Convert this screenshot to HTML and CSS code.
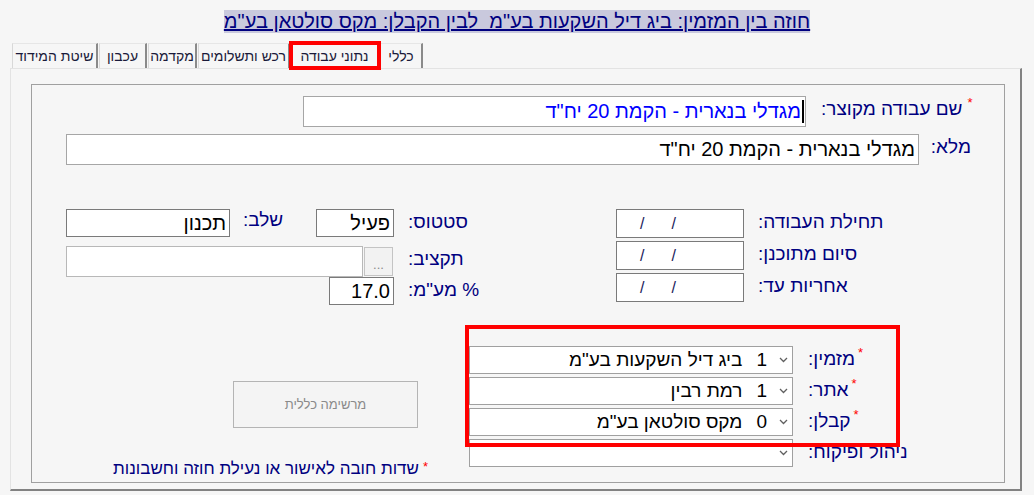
FILE: index.html
```html
<!DOCTYPE html>
<html lang="he" dir="rtl">
<head>
    <meta charset="UTF-8">
    <meta name="viewport" content="width=device-width, initial-scale=1.0">
    <title>נתוני עבודה</title>
    <link rel="stylesheet" href="styles.css">
</head>
<body>
    <div class="title-row">
        <h1 class="contract-title">חוזה בין המזמין: ביג דיל השקעות בע"מ&nbsp; לבין הקבלן: מקס סולטאן בע"מ</h1>
    </div>

    <!-- tabs, first tab is the rightmost -->
    <div class="tabs">
        <div class="tab tab-general">כללי</div>
        <div class="tab tab-work tab-marked">נתוני עבודה</div>
        <div class="tab tab-purchase">רכש ותשלומים</div>
        <div class="tab tab-advance">מקדמה</div>
        <div class="tab tab-retention">עכבון</div>
        <div class="tab tab-measure">שיטת המידוד</div>
    </div>

    <div class="panel">
        <div class="frame">
            <div class="row row-short">
                <div class="label lbl-short"><span class="req">*</span>שם עבודה מקוצר:</div>
                <div class="field field-short"><span class="caret"></span>מגדלי בנארית - הקמת 20 יח"ד</div>
            </div>
            <div class="row row-full">
                <div class="label lbl-full">מלא:</div>
                <div class="field field-full">מגדלי בנארית - הקמת 20 יח"ד</div>
            </div>

            <div class="details">
                <div class="dates">
                    <div class="row date-row">
                        <div class="label lbl-date">תחילת העבודה:</div>
                        <div class="field date"><span>/</span><span>/</span></div>
                    </div>
                    <div class="row date-row">
                        <div class="label lbl-date">סיום מתוכנן:</div>
                        <div class="field date"><span>/</span><span>/</span></div>
                    </div>
                    <div class="row date-row">
                        <div class="label lbl-date">אחריות עד:</div>
                        <div class="field date"><span>/</span><span>/</span></div>
                    </div>
                </div>

                <div class="status">
                    <div class="row status-row">
                        <div class="label lbl-status">סטטוס:</div>
                        <div class="field field-status">פעיל</div>
                        <div class="label lbl-stage">שלב:</div>
                        <div class="field field-stage">תכנון</div>
                    </div>
                    <div class="row budget-row">
                        <div class="label lbl-status">תקציב:</div>
                        <div class="dots-btn">...</div>
                        <div class="field field-budget"></div>
                    </div>
                    <div class="row vat-row">
                        <div class="label lbl-status">% מע"מ:</div>
                        <div class="field field-vat">17.0</div>
                    </div>
                </div>
            </div>

            <div class="parties">
                <div class="party-list">
                    <div class="row party-row">
                        <div class="label lbl-party"><span class="req">*</span>מזמין:</div>
                        <div class="select">
                            <span class="chev"><svg width="9" height="6" viewBox="0 0 9 6"><path d="M1 1l3.5 3.5L8 1" fill="none" stroke="#606060" stroke-width="1.3"/></svg></span>
                            <span class="code">1</span>
                            <span class="name">ביג דיל השקעות בע"מ</span>
                        </div>
                    </div>
                    <div class="row party-row">
                        <div class="label lbl-party"><span class="req">*</span>אתר:</div>
                        <div class="select">
                            <span class="chev"><svg width="9" height="6" viewBox="0 0 9 6"><path d="M1 1l3.5 3.5L8 1" fill="none" stroke="#606060" stroke-width="1.3"/></svg></span>
                            <span class="code">1</span>
                            <span class="name">רמת רבין</span>
                        </div>
                    </div>
                    <div class="row party-row">
                        <div class="label lbl-party"><span class="req">*</span>קבלן:</div>
                        <div class="select">
                            <span class="chev"><svg width="9" height="6" viewBox="0 0 9 6"><path d="M1 1l3.5 3.5L8 1" fill="none" stroke="#606060" stroke-width="1.3"/></svg></span>
                            <span class="code">0</span>
                            <span class="name">מקס סולטאן בע"מ</span>
                        </div>
                    </div>
                    <div class="row party-row">
                        <div class="label lbl-party">ניהול ופיקוח:</div>
                        <div class="select">
                            <span class="chev"><svg width="9" height="6" viewBox="0 0 9 6"><path d="M1 1l3.5 3.5L8 1" fill="none" stroke="#606060" stroke-width="1.3"/></svg></span>
                        </div>
                    </div>
                </div>

                <div class="side">
                    <button type="button" class="summary-btn" disabled>מרשימה כללית</button>
                    <div class="note"><span class="req">*</span>שדות חובה לאישור או נעילת חוזה וחשבונות</div>
                </div>

                <div class="marker"></div> <!-- red highlight around required parties -->
            </div>
        </div>
    </div>
</body>
</html>
```

FILE: styles.css
```css
* {
    box-sizing: border-box;
}
body {
    margin: 0;
    background-color: #f6f6f6;
    font-family: "Liberation Sans", Arial, sans-serif;
    color: #000080;
}

/* Title */
.title-row {
    text-align: center;
    padding-top: 10px;
    height: 43px;
}
.contract-title {
    display: inline-block;
    margin: 0;
    font-size: 20px;
    font-weight: normal;
    line-height: 23px;
    background-color: #c9c9dd;
    color: #000080;
    text-decoration: underline;
}

/* Tabs */
.tabs {
    display: flex;
    justify-content: flex-end;
    gap: 1px;
    padding-left: 12px;
    height: 25px;
}
.tab {
    height: 25px;
    border-top: 1px solid #e6e6e6;
    border-left: 1px solid #d8d8d8;
    border-right: 2px solid #8a8a8a;
    font-size: 14px;
    line-height: 24px;
    color: #1a1a3a;
    text-align: center;
    white-space: nowrap;
    overflow: hidden;
}
.tab-general { width: 43px; }
.tab-work { width: 88px; }
.tab-purchase { width: 92px; }
.tab-advance { width: 49px; }
.tab-retention { width: 48px; }
.tab-measure { width: 86px; }
.tab-marked {
    outline: 4px solid #ff0000;
    outline-offset: -2px;
    position: relative;
    z-index: 1;
}

/* Tab panel */
.panel {
    margin: 0 12px 0 10px;
    height: 423px;
    border-top: 1px solid #e3e3e3;
    border-left: 1px solid #e3e3e3;
    border-right: 2px solid #828282;
    border-bottom: 2px solid #828282;
    padding: 15px 15px 6px 20px;
}
.frame {
    height: 399px;
    border: 1px solid #a0a0a0;
}

/* Generic row / label / field */
.row {
    display: flex;
    align-items: flex-start;
}
.label {
    font-size: 19px;
    line-height: 26px;
    color: #000080;
    text-align: left;
    white-space: nowrap;
}
.req {
    color: #ff0000;
    font-size: 13px;
    vertical-align: top;
    line-height: 14px;
    margin-left: 5px;
}
.field {
    background-color: #fff;
    border: 1px solid #7a7a7a;
    font-size: 20px;
    color: #000;
    padding: 0 3px;
    white-space: nowrap;
    overflow: hidden;
}

/* Name rows */
.row-short {
    margin-top: 11px;
    padding-right: 22px;
}
.lbl-short { width: 161px; }
.field-short {
    display: flex;
    align-items: center;
    width: 503px;
    height: 31px;
    margin-right: 15px;
    border-color: #a6a6a6;
    color: #0000ff;
    padding-right: 1px;
}
.caret {
    width: 2px;
    height: 23px;
    background-color: #000;
    margin-left: 1px;
}
.row-full {
    margin-top: 7px;
    padding-right: 33px;
}
.lbl-full { width: 36px; }
.field-full {
    width: 853px;
    height: 31px;
    margin-right: 16px;
    border-color: #a6a6a6;
    line-height: 29px;
}

/* Dates and status */
.details {
    display: flex;
    align-items: flex-start;
    margin-top: 44px;
}
.dates {
    display: flex;
    flex-direction: column;
    gap: 3px;
    padding-right: 115px;
}
.lbl-date { width: 131px; }
.date {
    width: 128px;
    height: 29px;
    margin-right: 14px;
    direction: ltr;
    display: flex;
    align-items: center;
    padding-left: 23px;
    gap: 27px;
    font-size: 16px;
    color: #1a1a5a;
}
.status {
    margin-right: 135px;
}
.lbl-status { width: 73px; }
.field-status {
    width: 78px;
    height: 28px;
    margin-right: 14px;
    line-height: 26px;
}
.lbl-stage {
    width: 41px;
    margin-right: 32px;
    line-height: 22px;
}
.field-stage {
    width: 164px;
    height: 28px;
    margin-right: 13px;
    line-height: 26px;
}
.budget-row {
    margin-top: 9px;
}
.budget-row .label {
    line-height: 25px;
}
.dots-btn {
    width: 29px;
    height: 29px;
    margin-top: 1px;
    margin-right: 15px;
    border: 1px solid #c4c4c4;
    background-color: #f2f2f2;
    color: #8a8a8a;
    font-size: 13px;
    line-height: 34px;
    text-align: center;
}
.field-budget {
    width: 297px;
    height: 31px;
    margin-right: 1px;
    border-color: #b8b8b8;
}
.field-vat {
    width: 65px;
    height: 28px;
    margin-right: 14px;
    line-height: 27px;
}

/* Parties */
.parties {
    display: flex;
    align-items: flex-start;
    margin-top: 41px;
    position: relative;
}
.party-list {
    display: flex;
    flex-direction: column;
    gap: 3px;
    padding-right: 83px;
}
.lbl-party { width: 113px; }
.lbl-party .req {
    margin-left: 3px;
}
.select {
    display: flex;
    align-items: center;
    width: 324px;
    height: 28px;
    margin-right: 15px;
    background-color: #fff;
    border: 1px solid #a0a0a0;
    font-size: 19px;
    color: #000;
    white-space: nowrap;
}
.chev {
    display: flex;
    padding-right: 4px;
    width: 13px;
}
.code {
    margin-right: 12px;
}
.name {
    margin-right: 14px;
}
.side {
    display: flex;
    flex-direction: column;
    align-items: flex-start;
    margin-right: 41px;
}
.summary-btn {
    width: 185px;
    height: 47px;
    margin-top: 35px;
    margin-right: 10px;
    background-color: #f4f4f4;
    border: 1px solid #b4b4b4;
    color: #8a8a8a;
    font-family: "Liberation Sans", Arial, sans-serif;
    font-size: 13px;
}
.note {
    margin-top: 32px;
    font-size: 17px;
    line-height: 18px;
    color: #000080;
    white-space: nowrap;
}
.note .req {
    margin-left: 4px;
}
.marker {
    position: absolute;
    left: 433px;
    right: 104px;
    top: -21px;
    height: 122px;
    border: 4px solid #ff0000;
}
```
